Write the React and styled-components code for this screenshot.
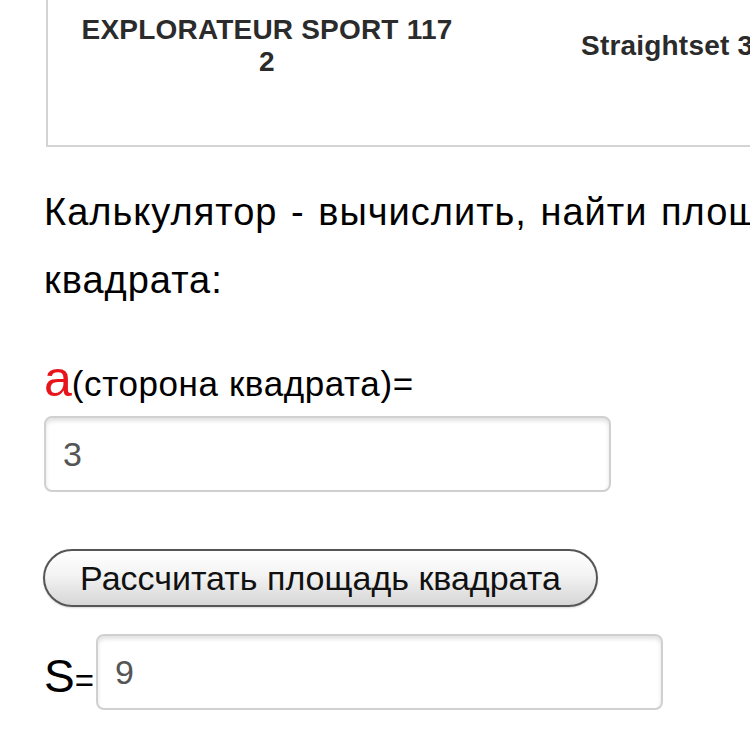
import styled, { createGlobalStyle } from "styled-components";

const GlobalStyle = createGlobalStyle`
  html, body {
    margin: 0;
    padding: 0;
    background: #fff;
    overflow: hidden;
    width: 750px;
    height: 750px;
  }
  body {
    font-family: "Liberation Sans", Arial, sans-serif;
    color: #000;
  }
`;

const Page = styled.div`
  width: 750px;
  height: 750px;
  overflow: hidden;
`;

const Products = styled.div`
  display: flex;
  margin-left: 46px;
  width: 1000px;
  height: 145px;
  border-left: 2px solid #d4d4d4;
  border-bottom: 2px solid #d4d4d4;
`;

const ProductCell = styled.div`
  flex: none;
  width: ${(p) => p.width}px;
  padding: ${(p) => p.top}px ${(p) => p.side}px 0;
  text-align: ${(p) => p.align};
  font-weight: 700;
  font-size: 28px;
  line-height: 32px;
  color: #2b2b2b;
  letter-spacing: 0.2px;
  white-space: ${(p) => (p.nowrap ? "nowrap" : "normal")};
  box-sizing: border-box;
`;

const Calc = styled.div`
  padding-left: 44px;
  padding-top: 31px;
`;

const Title = styled.p`
  margin: 0;
  font-size: 38px;
  letter-spacing: 1px;
  word-spacing: 2px;
  line-height: 68px;
  width: 850px;
`;

const Label = styled.div`
  margin-top: 43px;
  font-size: 35px;
  letter-spacing: 0.6px;
  line-height: 44px;
  display: flex;
  align-items: baseline;
`;

const Var = styled.span`
  font-size: ${(p) => p.size}px;
  letter-spacing: 0;
  color: ${(p) => p.color || "#000"};
`;

const Field = styled.div`
  box-sizing: border-box;
  width: 567px;
  height: 76px;
  border: 2px solid #d0d0d0;
  border-radius: 8px;
  box-shadow: inset 0 3px 4px rgba(0, 0, 0, 0.12);
  padding-left: 17px;
  display: flex;
  align-items: center;
  font-size: 34px;
  color: #555;
`;

const FieldRow = styled.div`
  margin-top: 10px;
`;

const CalcButton = styled.button`
  display: block;
  margin: 57px 0 0 -1px;
  width: 555px;
  height: 58px;
  border: 2px solid #555;
  border-radius: 29px;
  background: linear-gradient(#ffffff, #f3f3f3 45%, #d6d6d6);
  font-family: "Liberation Sans", Arial, sans-serif;
  font-size: 34px;
  color: #111;
  padding: 0;
  box-shadow: 0 1px 2px rgba(0, 0, 0, 0.15);
`;

const ResultRow = styled.div`
  margin-top: 27px;
  display: flex;
  align-items: center;
`;

const ResultLabel = styled.div`
  display: flex;
  align-items: baseline;
  font-size: 33px;
  margin: 8px 2px 0 0;
`;

export default function App() {
  return (
    <Page>
      <GlobalStyle />
      <Products>
        <ProductCell width={438} top={14} side={30} align="center">
          EXPLORATEUR SPORT 117 2
        </ProductCell>
        <ProductCell width={500} top={30} side={95} align="left" nowrap>
          Straightset 3
        </ProductCell>
      </Products>
      <Calc>
        <Title>Калькулятор - вычислить, найти площадь квадрата:</Title>
        <Label>
          <Var size={50} color="#e8141b">а</Var>
          <span>(сторона квадрата)=</span>
        </Label>
        <FieldRow>
          <Field>3</Field>
        </FieldRow>
        <CalcButton>Рассчитать площадь квадрата</CalcButton>
        <ResultRow>
          <ResultLabel>
            <Var size={46}>S</Var>
            <span>=</span>
          </ResultLabel>
          <Field>9</Field>
        </ResultRow>
      </Calc>
    </Page>
  );
}
